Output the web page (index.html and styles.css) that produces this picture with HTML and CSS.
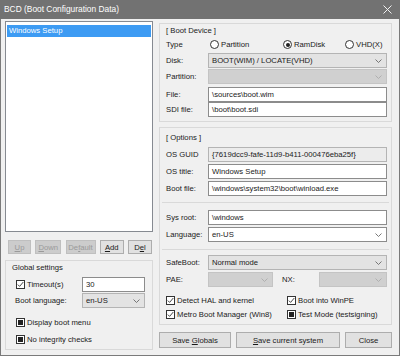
FILE: index.html
```html
<!DOCTYPE html>
<html lang="en">
<head>
    <meta charset="UTF-8">
    <title>BCD (Boot Configuration Data)</title>
    <link rel="stylesheet" href="styles.css">
</head>
<body>
    <div class="window">
        <div class="titlebar">
            <span class="title">BCD (Boot Configuration Data)</span>
            <svg class="close" width="9" height="9" viewBox="0 0 9 9"><path d="M0.5 0.5L8.5 8.5M8.5 0.5L0.5 8.5" stroke="#f2f2f2" stroke-width="1"/></svg>
        </div>
        <div class="client">
            <div class="left">
                <div class="listbox">
                    <div class="list-item selected">Windows Setup</div>
                </div>
                <div class="list-buttons">
                    <button class="btn b-up" disabled><u>U</u>p</button>
                    <button class="btn b-down" disabled><u>D</u>own</button>
                    <button class="btn b-default" disabled>De<u>f</u>ault</button>
                    <button class="btn b-add"><u>A</u>dd</button>
                    <button class="btn b-del">D<u>e</u>l</button>
                </div>
                <div class="group global">
                    <div class="group-title">Global settings</div>
                    <div class="g-row">
                        <div class="check"><span class="box"><svg viewBox="0 0 7 7"><path d="M0.8 3.6L2.6 5.4L6.3 1"/></svg></span>Timeout(s)</div>
                        <div class="edit">30</div>
                    </div>
                    <div class="g-row r-lang">
                        <span class="lbl">Boot language:</span>
                        <div class="combo">en-US<svg class="chev" viewBox="0 0 7 4"><path d="M0.5 0.5L3.5 3.5L6.5 0.5"/></svg></div>
                    </div>
                    <div class="check c-menu"><span class="box mixed"></span>Display boot menu</div>
                    <div class="check c-integrity"><span class="box mixed"></span>No integrity checks</div>
                </div>
            </div>
            <div class="right">
                <div class="panel boot-device">
                    <div class="panel-title">[ Boot Device ]</div>
                    <div class="row r-type">
                        <span class="lbl">Type</span>
                        <div class="radios">
                            <span class="radio"><span class="dot"></span>Partition</span>
                            <span class="radio"><span class="dot on"></span>RamDisk</span>
                            <span class="radio"><span class="dot"></span>VHD(X)</span>
                        </div>
                    </div>
                    <div class="row r-gap1">
                        <span class="lbl">Disk:</span>
                        <div class="combo">BOOT(WIM) / LOCATE(VHD)<svg class="chev" viewBox="0 0 7 4"><path d="M0.5 0.5L3.5 3.5L6.5 0.5"/></svg></div>
                    </div>
                    <div class="row r-gap1">
                        <span class="lbl">Partition:</span>
                        <div class="combo disabled"><svg class="chev" viewBox="0 0 7 4"><path d="M0.5 0.5L3.5 3.5L6.5 0.5"/></svg></div>
                    </div>
                    <div class="row r-gap3">
                        <span class="lbl">File:</span>
                        <div class="edit">\sources\boot.wim</div>
                    </div>
                    <div class="row">
                        <span class="lbl">SDI file:</span>
                        <div class="edit">\boot\boot.sdi</div>
                    </div>
                </div>

                <div class="panel options">
                    <div class="panel-title">[ Options ]</div>
                    <div class="row r-first">
                        <span class="lbl">OS GUID</span>
                        <div class="edit readonly">{7619dcc9-fafe-11d9-b411-000476eba25f}</div>
                    </div>
                    <div class="row r-gap2">
                        <span class="lbl">OS title:</span>
                        <div class="edit">Windows Setup</div>
                    </div>
                    <div class="row r-gap2">
                        <span class="lbl">Boot file:</span>
                        <div class="edit">\windows\system32\boot\winload.exe</div>
                    </div>
                    <div class="sep"></div>
                    <div class="row">
                        <span class="lbl">Sys root:</span>
                        <div class="edit">\windows</div>
                    </div>
                    <div class="row r-gap2">
                        <span class="lbl">Language:</span>
                        <div class="combo white">en-US<svg class="chev" viewBox="0 0 7 4"><path d="M0.5 0.5L3.5 3.5L6.5 0.5"/></svg></div>
                    </div>
                    <div class="sep sep2"></div>
                    <div class="row">
                        <span class="lbl">SafeBoot:</span>
                        <div class="combo">Normal mode<svg class="chev" viewBox="0 0 7 4"><path d="M0.5 0.5L3.5 3.5L6.5 0.5"/></svg></div>
                    </div>
                    <div class="row r-gap2 r-pae">
                        <span class="lbl">PAE:</span>
                        <div class="combo disabled"><svg class="chev" viewBox="0 0 7 4"><path d="M0.5 0.5L3.5 3.5L6.5 0.5"/></svg></div>
                        <span class="lbl nx">NX:</span>
                        <div class="combo disabled"><svg class="chev" viewBox="0 0 7 4"><path d="M0.5 0.5L3.5 3.5L6.5 0.5"/></svg></div>
                    </div>
                    <div class="checks c-first">
                        <div class="check"><span class="box"><svg viewBox="0 0 7 7"><path d="M0.8 3.6L2.6 5.4L6.3 1"/></svg></span>Detect HAL and kernel</div>
                        <div class="check"><span class="box"><svg viewBox="0 0 7 7"><path d="M0.8 3.6L2.6 5.4L6.3 1"/></svg></span>Boot into WinPE</div>
                    </div>
                    <div class="checks">
                        <div class="check"><span class="box"><svg viewBox="0 0 7 7"><path d="M0.8 3.6L2.6 5.4L6.3 1"/></svg></span>Metro Boot Manager (Win8)</div>
                        <div class="check"><span class="box mixed"></span>Test Mode (testsigning)</div>
                    </div>
                </div>

                <div class="actions">
                    <button class="btn b-globals">Save <u>G</u>lobals</button>
                    <button class="btn b-current"><u>S</u>ave current system</button>
                    <button class="btn b-close">Close</button>
                </div>
            </div>
        </div>
    </div>
</body>
</html>
```

FILE: styles.css
```css
* {
    box-sizing: border-box;
}
body {
    margin: 0;
    font-family: "Liberation Sans", Arial, sans-serif;
    font-size: 7.7px;
    color: #1a1a1a;
    background: #fff;
}
.window {
    width: 400px;
    height: 356px;
    background: #f0f0f0;
    border: 1px solid #7a7a7a;
    border-top: 0;
    display: flex;
    flex-direction: column;
}
.titlebar {
    height: 19px;
    flex-shrink: 0;
    margin: 0 -1px;
    background: #727272;
    color: #fff;
    font-size: 8.4px;
    display: flex;
    align-items: center;
    justify-content: space-between;
    padding: 0 8px 1px 4px;
}
.client {
    flex: 1;
    display: flex;
    gap: 6px;
    padding: 2px 7px 5px 4px;
}
.left {
    width: 148px;
    display: flex;
    flex-direction: column;
}
.right {
    flex: 1;
    display: flex;
    flex-direction: column;
    padding-top: 2px;
}

/* list */
.listbox {
    height: 211px;
    background: #fff;
    border: 1px solid #868a91;
    padding: 3px 1px;
}
.list-item {
    height: 12px;
    line-height: 12px;
    padding-left: 2px;
}
.list-item.selected {
    background: #3d9bf3;
    color: #fff;
}
.list-buttons {
    height: 14px;
    margin-top: 8px;
    display: flex;
    justify-content: space-between;
    padding: 0 1px 0 3px;
}

/* buttons */
.btn {
    font: inherit;
    color: #1a1a1a;
    background: #e1e1e1;
    border: 1px solid #adadad;
    padding: 0;
    margin: 0;
    height: 100%;
}
.btn:disabled {
    background: #cccccc;
    border-color: #bfbfbf;
    color: #9a9a9a;
}
.b-up { width: 23px; }
.b-down { width: 26px; }
.b-default { width: 30px; }
.b-add, .b-del { width: 24px; }

/* global settings */
.group {
    border: 1px solid #d9d9d9;
}
.global {
    height: 90px;
    margin-top: 6px;
    padding: 1px 7px 0 6px;
}
.group-title {
    height: 11px;
    line-height: 11px;
}
.g-row {
    display: grid;
    grid-template-columns: 66px 1fr;
    align-items: center;
    height: 15px;
    margin-top: 4px;
    padding-left: 4px;
}
.g-row.r-lang {
    margin-top: 1px;
}
.g-row .lbl {
    margin-left: -1px;
}
.c-menu {
    margin-top: 8px;
    padding-left: 4px;
    height: 12px;
}
.c-integrity {
    margin-top: 5px;
    padding-left: 4px;
    height: 12px;
}

/* checks and radios */
.check {
    display: flex;
    align-items: center;
    white-space: nowrap;
}
.box {
    width: 9px;
    height: 9px;
    border: 1px solid #333;
    background: #fff;
    margin-right: 2px;
    flex-shrink: 0;
    position: relative;
}
.box svg {
    display: block;
    width: 7px;
    height: 7px;
    fill: none;
    stroke: #333;
    stroke-width: 0.9;
}
.box.mixed::after {
    content: "";
    position: absolute;
    left: 1px;
    top: 1px;
    width: 5px;
    height: 5px;
    background: #222;
}
.radios {
    display: grid;
    grid-template-columns: 73px 62px auto;
    padding-left: 2px;
}
.radio {
    display: flex;
    align-items: center;
}
.dot {
    width: 9px;
    height: 9px;
    border: 1px solid #333;
    border-radius: 50%;
    background: #fff;
    margin-right: 2px;
    position: relative;
}
.dot.on::after {
    content: "";
    position: absolute;
    left: 1.5px;
    top: 1.5px;
    width: 4px;
    height: 4px;
    border-radius: 50%;
    background: #222;
}

/* panels */
.panel {
    border: 1px solid #d9d9d9;
    padding: 0 4px 0 6px;
}
.boot-device {
    height: 99px;
}
.options {
    height: 198px;
    margin-top: 5px;
    padding-top: 3px;
}
.panel-title {
    height: 13px;
    line-height: 13px;
}
.row {
    display: grid;
    grid-template-columns: 42px 1fr;
    align-items: center;
    height: 15px;
}
.r-gap1 { margin-top: 1px; }
.r-gap2 { margin-top: 2px; }
.r-gap3 { margin-top: 3px; }
.r-first { margin-top: 3px; }
.r-pae {
    grid-template-columns: 42px 65px 46px 1fr;
}
.lbl.nx {
    padding-left: 9px;
}
.sep {
    height: 1px;
    background: #d9d9d9;
    margin: 6px -2px 7px -4px;
}
.sep.sep2 {
    margin-top: 7px;
    margin-bottom: 5px;
}
.checks {
    display: grid;
    grid-template-columns: 121px 1fr;
    height: 12px;
    align-items: center;
    margin-top: 2px;
}
.checks.c-first {
    margin-top: 7px;
}

/* fields */
.edit, .combo {
    height: 15px;
    line-height: 13px;
    padding: 0 3px;
    white-space: nowrap;
    overflow: hidden;
}
.edit {
    background: #fff;
    border: 1px solid #8c8c8c;
}
.edit.readonly {
    background: #ececec;
    border-color: #b4b4b4;
}
.combo {
    position: relative;
    background: #e3e3e3;
    border: 1px solid #b4b4b4;
}
.combo.white {
    background: #fff;
    border-color: #8c8c8c;
}
.combo.disabled {
    background: #d0d0d0;
    border-color: #c4c4c4;
}
.chev {
    position: absolute;
    right: 4px;
    top: 5px;
    width: 7px;
    height: 4px;
    fill: none;
    stroke: #6a6a6a;
    stroke-width: 0.9;
}
.combo.disabled .chev {
    stroke: #ababab;
}

/* bottom buttons */
.actions {
    height: 16px;
    margin-top: 7px;
    display: flex;
    justify-content: space-between;
}
.b-globals { width: 72px; }
.b-current { width: 104px; }
.b-close { width: 47px; }
```
